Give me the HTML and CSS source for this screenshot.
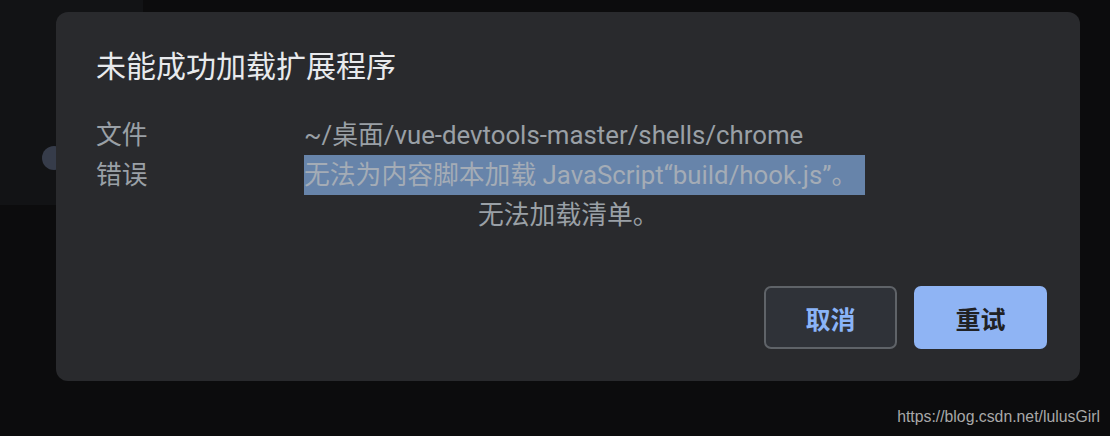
FILE: index.html
```html
<!DOCTYPE html>
<html lang="zh-CN">
<head>
    <meta charset="UTF-8">
    <meta name="viewport" content="width=device-width, initial-scale=1.0">
    <title>未能成功加载扩展程序</title>
    <link rel="stylesheet" href="styles.css">
</head>
<body>
    <div class="side-panel">
        <span class="knob"></span>
    </div>
    <div class="dialog">
        <h1 class="dialog-title">未能成功加载扩展程序</h1>
        <div class="details">
            <div class="label">文件</div>
            <div class="value">~/桌面/vue-devtools-master/shells/chrome</div>
            <div class="label">错误</div>
            <div class="value">
                <span class="selected">无法为内容脚本加载 JavaScript“build/hook.js”。</span>
                <div class="manifest">无法加载清单。</div>
            </div>
        </div>
        <div class="actions">
            <button class="btn btn-cancel">取消</button>
            <button class="btn btn-retry">重试</button>
        </div>
    </div>
    <div class="watermark">https://blog.csdn.net/lulusGirl</div>
</body>
</html>
```

FILE: styles.css
```css
body {
    margin: 0;
    padding: 12px 30px 0 56px;
    height: 436px;
    box-sizing: border-box;
    background-color: #0c0c0d;
    font-family: Roboto, "Noto Sans CJK SC", sans-serif;
    overflow: hidden;
}
.side-panel {
    position: absolute;
    left: 0;
    top: 0;
    width: 143px;
    height: 205px;
    background-color: #121315;
}
.knob {
    position: absolute;
    left: 42px;
    top: 146px;
    width: 24px;
    height: 24px;
    border-radius: 50%;
    background-color: #363c4a;
}
.dialog {
    position: relative;
    background-color: #292a2d;
    border-radius: 12px;
    height: 369px;
    box-sizing: border-box;
    padding: 35px 33px 0 40px;
    display: flex;
    flex-direction: column;
}
.dialog-title {
    margin: 0;
    font-size: 30px;
    font-weight: normal;
    line-height: 40px;
    color: #e8eaed;
}
.details {
    margin-top: 28px;
    display: grid;
    grid-template-columns: 208px auto;
    font-size: 25.8px;
    line-height: 40px;
    color: #9aa0a6;
}
.selected {
    display: inline-block;
    background-color: #6784aa;
    color: #a4acb6;
    padding-right: 8px;
}
.manifest {
    margin-left: 174px;
}
.actions {
    margin-top: 51px;
    display: flex;
    justify-content: flex-end;
    gap: 17px;
}
.btn {
    width: 133px;
    height: 63px;
    border-radius: 7px;
    font-family: Roboto, "Noto Sans CJK SC", sans-serif;
    font-size: 25px;
    font-weight: bold;
    cursor: pointer;
}
.btn-cancel {
    background-color: #2f3238;
    border: 2px solid #5f6368;
    color: #8ab4f8;
}
.btn-retry {
    background-color: #8fb4f4;
    border: none;
    color: #202124;
}
.watermark {
    position: absolute;
    right: 10px;
    bottom: 10px;
    font-family: "Liberation Sans", Arial, sans-serif;
    font-size: 15.8px;
    color: #a8a8a8;
}
```
